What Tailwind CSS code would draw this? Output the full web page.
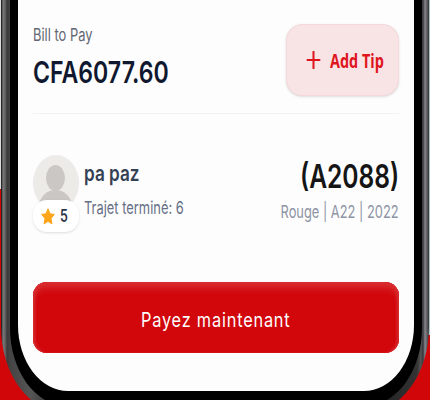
<!DOCTYPE html>
<html lang="fr">
<head>
  <meta charset="UTF-8">
  <meta name="viewport" content="width=device-width, initial-scale=1.0">
  <title>Paiement de la course</title>
  <script src="https://cdn.jsdelivr.net/npm/@tailwindcss/browser@4"></script>
</head>
<body class="h-[400px] w-[430px] overflow-hidden bg-[linear-gradient(to_right,transparent_50%,#a9bdc2_50%)] font-['Inter',sans-serif] antialiased">
  <div class="h-[400px] overflow-hidden bg-[linear-gradient(#d9dcdf_189px,#cf0508_189px)] bg-[length:215px_400px] bg-no-repeat">
    <div class="h-[400px] bg-[linear-gradient(transparent_335px,#d10609_335px)]">

      <!-- Phone frame -->
      <div class="ml-[1px] h-[413px] w-[428px] rounded-b-[64px_86px] bg-[linear-gradient(to_right,#111_0px,#777_2px,#666_4px,#3a3a3a_6px,#444_9px,#555_30px,#222_60px,#222_380px,#333_416px,#555_420px,#37343a_422px,#87878e_424px,#333_428px)] pr-[7px] pb-[7px] pl-[9px]">
        <div class="h-[406px] rounded-b-[57px_78px] bg-black pr-[8px] pl-[8px]">
          <div class="h-[391px] rounded-b-[50px_66px] bg-[#fdfdfd] px-[15px] pt-6">

            <!-- Amount -->
            <div class="flex h-[90px] justify-between border-b border-[#f2f2f3]">
              <div class="whitespace-nowrap">
                <p class="w-max origin-left scale-x-[0.76] text-[17px] leading-[22px] text-[#626773]">Bill to Pay</p>
                <p class="mt-[10px] w-max origin-left scale-x-[0.77] text-[30px] leading-[32px] font-semibold text-[#10182f]">CFA6077.60</p>
              </div>
              <button class="flex h-[72px] w-[113px] items-center rounded-[16px] border border-[#f3d9dc] bg-[#f8e3e5] pl-[19px] text-[#df151d] shadow-sm">
                <svg class="h-[20px] w-[15px] shrink-0" viewBox="0 0 15 20" fill="none" stroke="currentColor" stroke-width="2">
                  <path d="M7.500 1v18M.7 10h13.600"/>
                </svg>
                <span class="mt-[2px] ml-[9px] w-max shrink-0 origin-left scale-x-[0.74] font-['Open_Sans',sans-serif] text-[19.500px] font-bold whitespace-nowrap">Add Tip</span>
              </button>
            </div>

            <!-- Driver and vehicle -->
            <div class="flex justify-between pt-[41px] whitespace-nowrap">
              <div class="flex">
                <div class="w-[46px]">
                  <svg class="h-[56px] w-[46px]" viewBox="0 0 46 56">
                    <ellipse cx="23" cy="28" rx="23" ry="28" fill="#edebe8"/>
                    <ellipse cx="22.500" cy="23" rx="9.500" ry="13" fill="#cac7c5"/>
                    <path d="M6 49c2-8 8-14 16.500-14S37 41 39 49c-4 5-10 7-16 7S10 54 6 49z" fill="#cac7c5"/>
                  </svg>
                  <div class="relative -mt-[11px] flex h-[32px] w-[46px] items-center rounded-[14px] bg-white pl-[8px] shadow-sm">
                    <svg class="h-[17px] w-[14px] shrink-0" viewBox="0 0 14 17" fill="#fda51b" stroke="#fda51b" stroke-width="1" stroke-linejoin="round">
                      <path d="M7 .8l2 5 4.300.6-3.200 4 .8 5.500L7 13.300 3.100 15.900l.8-5.500-3.200-4L5 5.800z"/>
                    </svg>
                    <span class="mt-[2px] ml-[5px] origin-left scale-x-[0.73] text-[17px] font-semibold text-[#2c3445]">5</span>
                  </div>
                </div>
                <div class="ml-[5px] w-[100px] pt-[4px]">
                  <p class="w-max origin-left scale-x-[0.78] text-[22px] leading-[28px] font-semibold text-[#344054]">pa paz</p>
                  <p class="mt-[10px] w-max origin-left scale-x-[0.737] text-[17.500px] leading-[22px] text-[#667085]">Trajet terminé: 6</p>
                </div>
              </div>
              <div class="flex w-[130px] flex-col items-end pt-[2px]">
                <p class="w-max origin-right scale-x-[0.745] text-[33px] leading-[38px] font-semibold text-[#151515]">(A2088)</p>
                <p class="mt-[6px] w-max origin-right scale-x-[0.735] text-[17.500px] leading-[22px] text-[#8d94a4]">Rouge | A22 | 2022</p>
              </div>
            </div>

            <!-- Payment -->
            <button class="mt-[50px] flex h-[71px] w-full items-center justify-center rounded-[14px] bg-[#d1070c] text-white shadow-[inset_0_9px_7px_-3px_#d82e31,inset_3px_0_3px_-1px_#d82e31,inset_-3px_0_3px_-1px_#d82e31,inset_0_0_0_1px_#d1070c]">
              <span class="mt-[4px] scale-x-[0.815] text-[20px] tracking-[1px] whitespace-nowrap">Payez maintenant</span>
            </button>
          </div>
        </div>
      </div>
    </div>
  </div>
</body>
</html>
